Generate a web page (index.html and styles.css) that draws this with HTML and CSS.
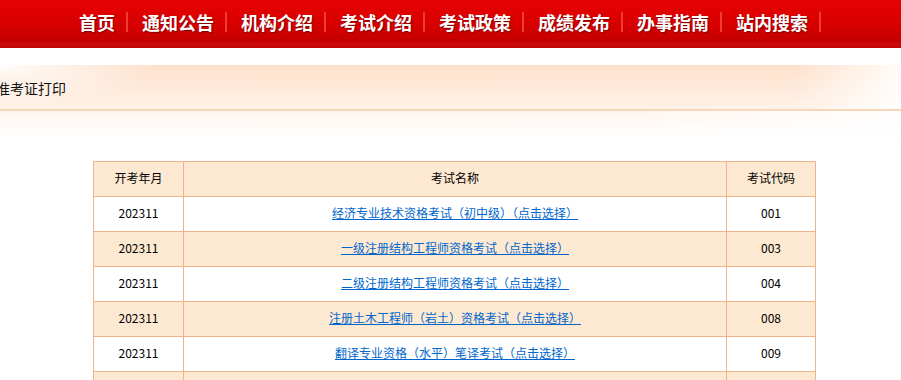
FILE: index.html
```html
<!DOCTYPE html>
<html lang="zh-CN">
<head>
<meta charset="utf-8">
<title>准考证打印</title>
<link rel="stylesheet" href="styles.css">
</head>
<body>
<header class="nav">
  <ul class="nav-list">
    <li><a href="#">首页</a></li>
    <li><a href="#">通知公告</a></li>
    <li><a href="#">机构介绍</a></li>
    <li><a href="#">考试介绍</a></li>
    <li><a href="#">考试政策</a></li>
    <li><a href="#">成绩发布</a></li>
    <li><a href="#">办事指南</a></li>
    <li><a href="#">站内搜索</a></li>
  </ul>
</header>
<div class="crumb">
  <div class="crumb-band"><span class="crumb-title">准考证打印</span></div>
  <div class="crumb-fade"></div>
</div>
<main class="content">
  <table class="exam-table">
    <thead>
      <tr><th class="c-date">开考年月</th><th class="c-name">考试名称</th><th class="c-code">考试代码</th></tr>
    </thead>
    <tbody>
      <tr><td>202311</td><td><a href="#">经济专业技术资格考试（初中级）（点击选择）</a></td><td>001</td></tr>
      <tr class="alt"><td>202311</td><td><a href="#">一级注册结构工程师资格考试（点击选择）</a></td><td>003</td></tr>
      <tr><td>202311</td><td><a href="#">二级注册结构工程师资格考试（点击选择）</a></td><td>004</td></tr>
      <tr class="alt"><td>202311</td><td><a href="#">注册土木工程师（岩土）资格考试（点击选择）</a></td><td>008</td></tr>
      <tr><td>202311</td><td><a href="#">翻译专业资格（水平）笔译考试（点击选择）</a></td><td>009</td></tr>
      <tr class="alt"><td>202311</td><td><a href="#">翻译专业资格（水平）口译考试（点击选择）</a></td><td>010</td></tr>
    </tbody>
  </table>
</main>
</body>
</html>
```
FILE: styles.css
```css
html, body {
  margin: 0;
  padding: 0;
  background: #fff;
  font-family: "Noto Sans CJK SC", "Noto Sans", sans-serif;
}

.nav {
  height: 48px;
  background: linear-gradient(to bottom, #e80202 0px, #d40000 28px, #c30000 42px, #d00c0c 43px, #c00404 48px);
}

.nav-list {
  list-style: none;
  margin: 0;
  padding: 0 15px 0 0;
  display: flex;
  justify-content: center;
  height: 43px;
  align-items: center;
}

.nav-list li {
  display: flex;
  align-items: center;
  padding: 0 12px 0 14px;
}

.nav-list li::after {
  content: "";
  display: block;
  width: 2px;
  height: 20px;
  background: #ef3b33;
  margin-left: 11px;
  margin-right: -12px;
}

.nav-list a {
  color: #fff;
  font-size: 18px;
  font-weight: bold;
  line-height: 24px;
  text-decoration: none;
  text-shadow: 1px 1px 1px #7a0000;
}

.crumb {
  margin-top: 17px;
}

.crumb-band {
  height: 44px;
  border-bottom: 2px solid #f6d7ba;
  display: flex;
  align-items: center;
  background:
    linear-gradient(to right, rgba(255,255,255,0) 88%, rgba(255,255,255,0.9) 100%),
    radial-gradient(ellipse 160px 40px at 0 0, rgba(255,255,255,0.9), rgba(255,255,255,0)),
    linear-gradient(to bottom, #fee0c9 0%, #feeadb 55%, #fff2e8 100%);
}

.crumb-title {
  font-size: 14px;
  color: #111;
  margin-left: -4px;
  padding-top: 2px;
}

.crumb-fade {
  height: 28px;
  background:
    linear-gradient(to right, rgba(255,255,255,0) 70%, rgba(255,255,255,0.9) 100%),
    linear-gradient(to bottom, #fff5ee, #ffffff);
}

.content {
  padding: 22px 0 0 93px;
}

.exam-table {
  border-collapse: collapse;
  width: 723px;
  font-size: 12px;
  color: #000;
}

.exam-table th,
.exam-table td {
  border: 1px solid #efb48b;
  height: 31px;
  padding: 0 0 3px;
  text-align: center;
  font-weight: normal;
}

.exam-table thead th {
  background: #fde9d1;
}

.c-date { width: 89px; }
.c-name { width: 542px; }
.c-code { width: 88px; }

.exam-table tr.alt td {
  background: #fde9d1;
}

.exam-table a {
  color: #0066cc;
  text-decoration: underline;
}
```
